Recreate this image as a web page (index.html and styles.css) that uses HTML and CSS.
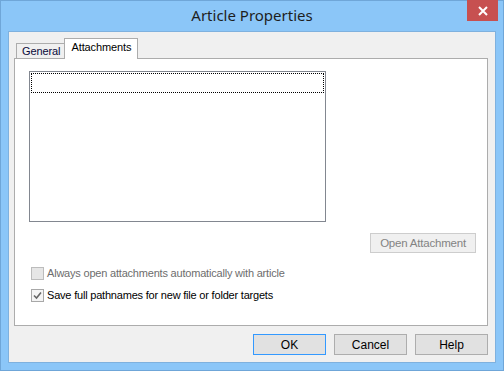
FILE: index.html
```html
<!DOCTYPE html>
<html lang="en">
<head>
    <meta charset="UTF-8">
    <title>Article Properties</title>
    <link rel="stylesheet" href="styles.css">
</head>
<body>
    <div class="window">
        <div class="titlebar">
            <span class="title">Article Properties</span>
            <button class="close-btn" title="Close">
                <svg viewBox="0 0 10 10" width="10" height="10">
                    <path d="M1 1 L9 9 M9 1 L1 9" stroke="#fff" stroke-width="2"/>
                </svg>
            </button>
        </div>

        <div class="client">
            <div class="tabs">
                <div class="tab">General</div>
                <div class="tab active">Attachments</div>
            </div>

            <div class="panel">
                <div class="listbox">
                    <div class="focus-row"></div>
                </div>

                <div class="action-row">
                    <button class="btn disabled">Open Attachment</button>
                </div>

                <label class="check disabled">
                    <span class="box"></span>
                    Always open attachments automatically with article
                </label>
                <label class="check">
                    <span class="box checked">
                        <svg viewBox="0 0 11 11" width="11" height="11">
                            <path d="M2 5.5 L4.5 8 L9 2.5" fill="none" stroke="#666" stroke-width="1.6"/>
                        </svg>
                    </span>
                    Save full pathnames for new file or folder targets
                </label>
            </div>

            <div class="footer">
                <button class="btn default">OK</button>
                <button class="btn">Cancel</button>
                <button class="btn">Help</button>
            </div>
        </div>
    </div>
</body>
</html>
```

FILE: styles.css
```css
html, body {
    margin: 0;
    padding: 0;
}
body {
    width: 504px;
    height: 371px;
    overflow: hidden;
    font-family: 'Liberation Sans', Arial, sans-serif;
    font-size: 11px;
    color: #000;
}
.window {
    box-sizing: border-box;
    width: 504px;
    height: 371px;
    background-color: #8bc6f8;
    border: 1px solid #6fa6d8;
    padding: 0 7px 7px 7px;
    display: flex;
    flex-direction: column;
}
.titlebar {
    position: relative;
    height: 30px;
    display: flex;
    align-items: center;
    justify-content: center;
}
.title {
    font-family: 'Noto Sans', 'Open Sans', sans-serif;
    font-size: 15px;
    color: #1e1e1e;
    margin-top: -3px;
}
.close-btn {
    position: absolute;
    top: -1px;
    right: -2px;
    width: 31px;
    height: 21px;
    border: none;
    padding: 0;
    background-color: #c75050;
    display: flex;
    align-items: center;
    justify-content: center;
}
.client {
    flex: 1;
    background-color: #f0f0f0;
    border: 1px solid #7fb1de;
    padding: 6px 7px 0 5px;
    display: flex;
    flex-direction: column;
}
.tabs {
    display: flex;
    align-items: flex-end;
    padding-left: 2px;
    height: 20px;
    position: relative;
    z-index: 1;
}
.tab {
    box-sizing: border-box;
    height: 15px;
    padding: 1px 4px 0 5px;
    border: 1px solid #acacac;
    border-bottom: none;
    background-color: #f0f0f0;
    font-size: 11px;
    letter-spacing: -0.1px;
    line-height: 13px;
    color: #0a0a3a;
}
.tab.active {
    height: 21px;
    margin-bottom: -1px;
    padding: 2px 6px 0 6px;
    background-color: #fff;
    color: #000;
    margin-left: -1px;
}
.panel {
    box-sizing: border-box;
    height: 268px;
    background-color: #fff;
    border: 1px solid #acacac;
    padding: 12px 11px 0 14px;
    display: flex;
    flex-direction: column;
}
.listbox {
    box-sizing: border-box;
    width: 297px;
    height: 151px;
    border: 1px solid #828790;
    background-color: #fff;
    padding: 1px;
}
.focus-row {
    height: 18px;
    border: 1px dotted #000;
}
.action-row {
    display: flex;
    justify-content: flex-end;
    margin-top: 11px;
}
.btn {
    box-sizing: border-box;
    height: 21px;
    min-width: 73px;
    padding: 0 9px;
    border: 1px solid #adadad;
    background-color: #e1e1e1;
    font-family: 'Liberation Sans', Arial, sans-serif;
    font-size: 12px;
    color: #000;
}
.btn.default {
    border-color: #3399ff;
    box-shadow: inset 0 0 0 1px #e1e1e1;
}
.btn.disabled {
    color: #838383;
    background-color: #f0f0f0;
    border-color: #cdcdcd;
    height: 20px;
    padding: 0 9px;
    font-size: 11.5px;
    letter-spacing: -0.2px;
}
.check {
    display: flex;
    align-items: center;
    gap: 3px;
    margin-left: 2px;
    height: 22px;
    font-size: 11px;
    letter-spacing: -0.2px;
    color: #000;
}
.check.disabled {
    color: #6d6d6d;
    margin-top: 9px;
}
.box {
    box-sizing: border-box;
    width: 13px;
    height: 13px;
    border: 1px solid #bcbcbc;
    background-color: #e6e6e6;
    display: flex;
    align-items: center;
    justify-content: center;
}
.box.checked {
    border-color: #a8a8a8;
    background-color: #f4f4f4;
}
.footer {
    display: flex;
    justify-content: flex-end;
    gap: 8px;
    margin-top: 8px;
}
```
